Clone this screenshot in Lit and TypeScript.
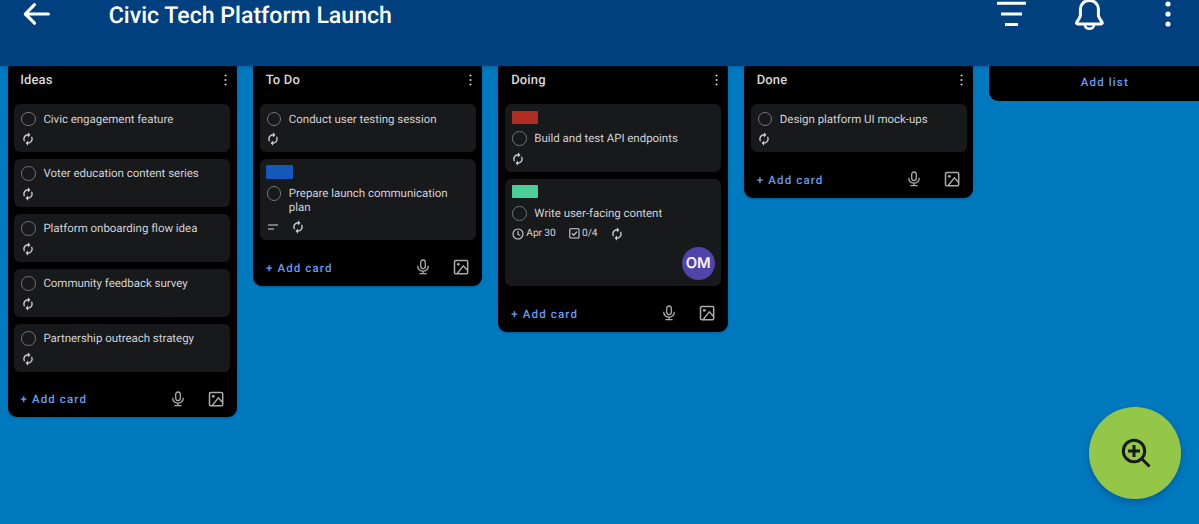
import { LitElement, html, css, svg, nothing } from "lit";
import { customElement, property } from "lit/decorators.js";

interface Card {
  title: string;
  label?: string;
  description?: boolean;
  due?: string;
  checklist?: string;
  member?: string;
}
interface List {
  name: string;
  cards: Card[];
}

const LISTS: List[] = [
  {
    name: "Ideas",
    cards: [
      { title: "Civic engagement feature" },
      { title: "Voter education content series" },
      { title: "Platform onboarding flow idea" },
      { title: "Community feedback survey" },
      { title: "Partnership outreach strategy" },
    ],
  },
  {
    name: "To Do",
    cards: [
      { title: "Conduct user testing session" },
      { title: "Prepare launch communication plan", label: "blue", description: true },
    ],
  },
  {
    name: "Doing",
    cards: [
      { title: "Build and test API endpoints", label: "red" },
      { title: "Write user-facing content", label: "green", due: "Apr 30", checklist: "0/4", member: "OM" },
    ],
  },
  { name: "Done", cards: [{ title: "Design platform UI mock-ups" }] },
];

const icon = (w: number, h: number, body: unknown) =>
  html`<svg width=${w} height=${h} viewBox="0 0 ${w} ${h}" fill="none" stroke="currentColor">${body}</svg>`;

const syncIcon = html`<svg width="14" height="14" viewBox="0 0 24 24" fill="currentColor" stroke="currentColor" stroke-width=".3">
  <path d="M12 6v3l4-4-4-4v3c-4.42 0-8 3.58-8 8 0 1.57.46 3.03 1.24 4.26L6.7 14.8c-.45-.83-.7-1.79-.7-2.8 0-3.31 2.69-6 6-6zm6.76 1.74L17.3 9.2c.44.84.7 1.79.7 2.8 0 3.31-2.69 6-6 6v-3l-4 4 4 4v-3c4.42 0 8-3.58 8-8 0-1.57-.46-3.03-1.24-4.26z"/>
</svg>`;
const clockIcon = icon(12, 12, svg`
  <circle cx="6" cy="6" r="5" stroke-width="1.1"/><path stroke-width="1.1" d="M6 3V6.2L8.3 7.6"/>`);
const checkIcon = icon(11, 11, svg`
  <rect x=".8" y=".8" width="9.2" height="9.2" rx=".8" stroke-width="1.1"/><path stroke-width="1.2" d="M2.9 5.3L4.7 7.2L8 3.6"/>`);
const descIcon = icon(12, 6, svg`<path stroke-width="1.2" d="M1 1H11M1 5H7"/>`);
const micIcon = icon(12, 16, svg`
  <rect x="3.7" y="1" width="4.6" height="8.6" rx="2.3" stroke-width="1.3"/>
  <path stroke-width="1.3" d="M.8 6.8V7.4A5.2 4.7 0 0 0 11.2 7.4V6.8M6 12.1V14.8M2.4 14.7H9.6"/>`);
const imageIcon = icon(16, 16, svg`
  <rect x="1.5" y="1.5" width="13.2" height="13.2" rx="1.3" stroke-width="1.5"/>
  <circle cx="5.3" cy="5.3" r="1.4" fill="currentColor" stroke="none"/>
  <path stroke-width="1.4" d="M4.4 14.2L10.4 6.8L14.4 11.2"/>`);
const dotsIcon = icon(3, 12, svg`
  <g fill="currentColor" stroke="none"><circle cx="1.5" cy="1.6" r="1"/><circle cx="1.5" cy="6" r="1"/><circle cx="1.5" cy="10.4" r="1"/></g>`);

@customElement("board-card")
class BoardCard extends LitElement {
  @property({ attribute: false }) card!: Card;

  static styles = css`
    :host {
      display: block;
      box-sizing: border-box;
      background: #18191b;
      border-radius: 6px;
      padding: 6.5px 6.5px 6.2px;
      color: #d0d3d6;
    }
    svg { display: block; flex: none; }
    .label { width: 26.5px; height: 13.2px; border-radius: 1px; margin-bottom: 6.6px; }
    .blue { background: #1558bc; }
    .red { background: #ae2e24; }
    .green { background: #4bce97; }
    .row { display: flex; align-items: flex-start; gap: 7.4px; padding: 1px 0 0 0.8px; }
    .check {
      flex: none;
      box-sizing: border-box;
      width: 14.6px;
      height: 14.6px;
      border: 1.3px solid #737679;
      border-radius: 50%;
    }
    .title { font-size: 11.5px; line-height: 14px; letter-spacing: -0.03px; padding-right: 10px; }
    .meta { display: flex; align-items: center; height: 14px; margin-top: 6px; padding-left: 0.8px; gap: 13.5px; }
    .item { display: flex; align-items: center; gap: 2px; font-size: 10.2px; line-height: 14px; }
    .item span { letter-spacing: -0.1px; padding-top: 1px; }
    .sync { margin-left: -0.9px; }
    .members { display: flex; justify-content: flex-end; margin-top: 6.5px; }
    .avatar {
      width: 33px;
      height: 33px;
      border-radius: 50%;
      background: #5243aa;
      color: #f4f3fb;
      font: 600 14.8px/32px Inter, sans-serif;
      text-align: center;
      letter-spacing: -0.2px;
    }
  `;

  render() {
    const c = this.card;
    return html`
      ${c.label ? html`<div class="label ${c.label}"></div>` : nothing}
      <div class="row"><span class="check"></span><span class="title">${c.title}</span></div>
      <div class="meta">
        ${c.description ? html`<span class="item">${descIcon}</span>` : nothing}
        ${c.due ? html`<span class="item">${clockIcon}<span>${c.due}</span></span>` : nothing}
        ${c.checklist ? html`<span class="item">${checkIcon}<span>${c.checklist}</span></span>` : nothing}
        <span class="item sync">${syncIcon}</span>
      </div>
      ${c.member ? html`<div class="members"><span class="avatar">${c.member}</span></div>` : nothing}
    `;
  }
}

@customElement("board-list")
class BoardList extends LitElement {
  @property({ attribute: false }) list!: List;

  static styles = css`
    :host {
      display: flex;
      flex-direction: column;
      box-sizing: border-box;
      flex: none;
      width: 229.3px;
      padding: 0 6.6px;
      background: #000;
      border-radius: 9px;
      box-shadow: 0 1px 2px #00335a66;
    }
    svg { display: block; }
    .head {
      display: flex;
      justify-content: space-between;
      align-items: center;
      height: 28px;
      padding: 6px 3.6px 10px 6.1px;
      color: #d6d8da;
    }
    .name { font-size: 13px; line-height: 18px; font-weight: 500; letter-spacing: 0.15px; padding-top: 1px; }
    .cards { display: flex; flex-direction: column; gap: 6.6px; }
    .foot { display: flex; align-items: center; height: 45.7px; padding: 0 6.3px; padding-top: 8px; box-sizing: border-box; color: #a9abad; }
    .add { flex: 1; color: #669df1; font-size: 11.5px; font-weight: 500; letter-spacing: 1.13px; padding-top: 1px; }
    .mic { margin-right: 24px; }
  `;

  render() {
    return html`
      <div class="head"><span class="name">${this.list.name}</span>${dotsIcon}</div>
      <div class="cards">${this.list.cards.map((c) => html`<board-card .card=${c}></board-card>`)}</div>
      <div class="foot"><span class="add">+ Add card</span><span class="mic">${micIcon}</span>${imageIcon}</div>
    `;
  }
}

@customElement("app-root")
class AppRoot extends LitElement {
  static styles = css`
    :host {
      display: flex;
      flex-direction: column;
      position: relative;
      width: 100%;
      height: 524px;
      overflow: hidden;
      background: #0079bf;
      font-family: Roboto, sans-serif;
      text-rendering: geometricPrecision;
    }
    svg { display: block; }
    .bar {
      display: flex;
      flex: none;
      box-sizing: border-box;
      height: 66px;
      padding: 0 28px 0 22px;
      background: #00407f;
      color: #fff;
      z-index: 1;
      box-shadow: 0 1px 3px #00336655;
    }
    .back { width: 86.8px; padding-top: 1px; }
    .title { flex: 1; margin: 0; font-size: 23.1px; line-height: 32px; font-weight: 500; }
    .filter { margin-right: 48px; }
    .bell { margin-right: 61px; }
    .board { display: flex; align-items: flex-start; gap: 16.2px; padding-left: 7.5px; margin-top: -6px; }
    .add-list {
      flex: none;
      box-sizing: border-box;
      width: 229.3px;
      height: 40.7px;
      border-radius: 9px;
      background: #000;
      color: #669df1;
      font-size: 11.5px;
      font-weight: 500;
      line-height: 44px;
      letter-spacing: 1.13px;
      text-indent: 1.5px;
      text-align: center;
    }
    .zoom {
      position: absolute;
      right: 18px;
      bottom: 25px;
      box-sizing: border-box;
      width: 92px;
      height: 92px;
      padding-left: 2px;
      display: grid;
      place-items: center;
      border-radius: 50%;
      background: #94c748;
      color: #18191b;
      box-shadow: 0 3px 7px #00336666;
    }
  `;

  render() {
    return html`
      <header class="bar">
        <span class="back">${icon(30, 28, svg`<path stroke-width="3.2" stroke-linecap="round" stroke-linejoin="round" d="M26.4 13H4M12.5 3.6L3.3 13L12.5 22.2"/>`)}</span>
        <h1 class="title">Civic Tech Platform Launch</h1>
        <span class="filter">${icon(30, 28, svg`<path stroke-width="3" d="M1 3.2H30M5 14H26M9 24.5H22"/>`)}</span>
        <span class="bell">${icon(30, 32, svg`
          <path stroke-width="3" stroke-linejoin="round" d="M15.4 .6C10 .6 6.4 4.3 6.4 9.3V15.2C6.4 17.2 4 20.2 2.8 22.2C2.3 23.1 2.7 24 3.7 24H27.1C28.1 24 28.5 23.1 28 22.2C26.8 20.2 24.4 17.2 24.4 15.2V9.3C24.4 4.3 20.8 .6 15.4 .6Z"/>
          <path stroke-width="2.6" d="M10.6 24.5C11.2 27.5 12.9 28.8 15.4 28.8S19.6 27.5 20.2 24.5"/>`)}</span>
        <span>${icon(6, 28, svg`<g fill="currentColor" stroke="none"><circle cx="3" cy="4" r="2.6"/><circle cx="3" cy="14" r="2.6"/><circle cx="3" cy="24" r="2.6"/></g>`)}</span>
      </header>
      <main class="board">
        ${LISTS.map((l) => html`<board-list .list=${l}></board-list>`)}
        <div class="add-list">Add list</div>
      </main>
      <div class="zoom">${icon(30, 30, svg`
        <circle cx="13" cy="13" r="10.7" stroke-width="3"/>
        <path stroke-width="3" d="M20.5 20.5L28.5 28.5M13 7V19M7 13H19"/>`)}</div>
    `;
  }
}
